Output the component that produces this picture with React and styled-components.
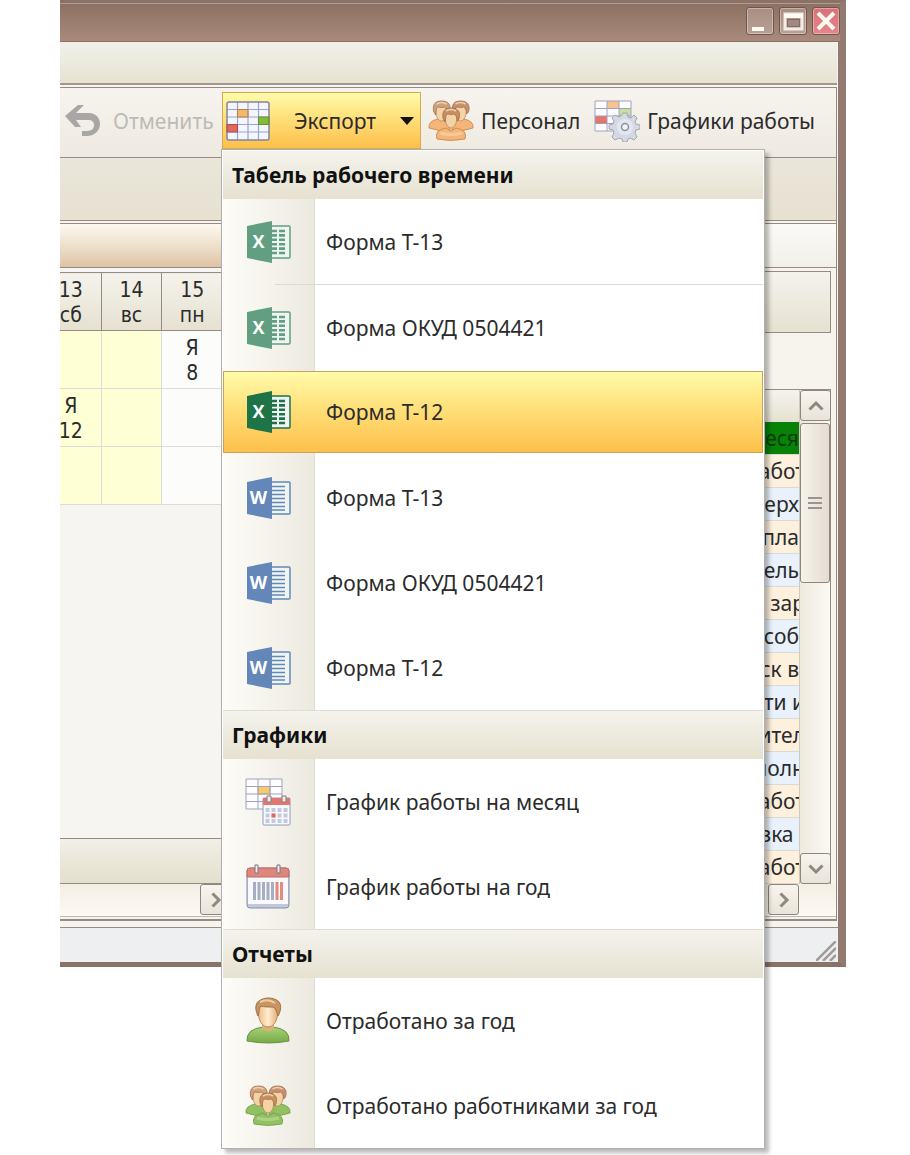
import React from "react";
import styled, { createGlobalStyle, css } from "styled-components";

const Global = createGlobalStyle`
  *, *::before, *::after { box-sizing: border-box; }
  body { margin: 0; background: #fff; color: #2b2b2b; font: 21px/28px "Noto Sans", "Open Sans", sans-serif; }
  button { font: inherit; color: inherit; border: 0; padding: 0; background: none; cursor: pointer; }
`;

const sand = "linear-gradient(#f4f3ec, #e6e1d0)";
const amber = "linear-gradient(#fffcab, #ffe07a 45%, #fdbf4a)";
const line = "#958b83";

const Page = styled.div`
  padding: 0 64px 188px 60px;
`;

const Window = styled.div`
  border: solid #8a7268;
  border-width: 3px 8px 5px 0;
  border-right-color: #927a70;
  background: #f7f4ee;
`;

const TitleBar = styled.header`
  display: flex;
  justify-content: flex-end;
  gap: 5px;
  height: 39px;
  padding: 3px 0;
  margin-right: -2px;
  border-top: 1px solid #b59c90;
  border-bottom: 1px solid #8b7268;
  background: linear-gradient(#8d7163, #a98a7b);
`;

const WindowButton = styled.button`
  width: 28px;
  height: 28px;
  border: 1px solid #6e574e;
  border-radius: 3px;
  box-shadow: inset 0 0 0 1px #ffffff55;
  background: ${(p) => (p.$close ? "linear-gradient(#d9717a, #e4858b)" : "linear-gradient(#a88e83, #b9a094)")};
  svg { display: block; }
`;

const MenuStrip = styled.div`
  height: 43px;
  margin-right: 1px;
  border-bottom: 2px solid #a3968e;
  background: linear-gradient(#f0f0ea, #edebdf 45%, #e7e2d1);
`;

const Frame = styled.div`
  margin: 2px 1px 0 0;
  padding-bottom: 2px;
  border: solid ${line};
  border-width: 1px 1px 2px 0;
`;

const Toolbar = styled.nav`
  display: flex;
  align-items: flex-start;
  height: 70px;
  padding: 4px 0 0 4px;
  border-bottom: 1px solid ${line};
  background: linear-gradient(#f7f4ef, #eeeae1);
  white-space: nowrap;
`;

const ToolButton = styled.button`
  display: flex;
  align-items: center;
  gap: ${(p) => p.$gap || 7}px;
  height: 57px;
  margin-right: ${(p) => p.$after || 0}px;
  &:disabled { width: 150px; color: #bdbab5; }
  svg { flex: none; }
`;

const ExportGroup = styled.div`
  position: relative;
  width: 199px;
  margin-right: 7px;
`;

const ExportButton = styled.button`
  display: flex;
  align-items: center;
  justify-content: space-between;
  width: 100%;
  height: 57px;
  padding: 0 6px 0 3px;
  border: 1px solid #d9a654;
  background: ${amber};
`;

const Menu = styled.div`
  position: absolute;
  z-index: 2;
  top: 57px;
  left: -1px;
  width: 544px;
  padding: 1px 1px 0;
  border: 1px solid #b3b0ab;
  background: #fff;
  box-shadow: 4px 4px 4px #00000045;
`;

const MenuHeading = styled.h2`
  height: ${(p) => (p.$ruled ? 49 : 48)}px;
  margin: 0;
  padding: 10px 9px;
  border-top: ${(p) => (p.$ruled ? "1px solid #dedcd3" : "0")};
  background: ${sand};
  color: #111;
  font-size: 21px;
  line-height: 28px;
`;

const MenuGroup = styled.div`
  background: linear-gradient(90deg, #fdfcf7, #f3f1e9 60%, #ece9df 91px, #dddbd3 91px, #dddbd3 92px, #fff 92px);
  background-size: 92px 100%;
  background-repeat: no-repeat;
`;

const MenuItem = styled.button`
  display: grid;
  grid-template-columns: 90px 1fr;
  align-items: center;
  width: 100%;
  height: 85px;
  text-align: left;
  svg { justify-self: center; }
  span { padding-left: 13px; }
  ${(p) => p.$active && css`
    height: 82px;
    margin: 1px 0 2px;
    background: ${amber};
    box-shadow: inset 0 0 0 1px #cfa05a;
  `}
`;

const Separator = styled.hr`
  height: 1px;
  margin: 0 0 0 52px;
  border: 0;
  background: #dcdad3;
`;

const SubBar = styled.div`
  height: 63px;
  border-bottom: 1px solid ${line};
  background: linear-gradient(#eae6d9, #e6e1d1);
`;

const Body = styled.main`
  display: flex;
  margin-top: 2px;
  border-top: 1px solid ${line};
`;

const SchedulePane = styled.section`
  flex: 0 0 171px;
  display: flex;
  flex-direction: column;
  overflow: hidden;
  background: #f6f5f2;
`;

const Band = styled.div`
  height: 44px;
  border-bottom: 1px solid ${line};
  background: ${(p) => (p.$warm ? "linear-gradient(#fdf8ee, #efe3d0 45%, #dfc3a5)" : "linear-gradient(#fbfaf7, #f2f0e9)")};
`;

const Schedule = styled.table`
  width: 183px;
  margin: 4px 0 0 -20px;
  table-layout: fixed;
  border-collapse: collapse;
  font: 21px/25px "DejaVu Sans Condensed", "Noto Sans", sans-serif;
  text-align: center;
  th { height: 58px; padding: 3px 0 0; border: 1px solid ${line}; background: ${sand}; font-weight: 400; white-space: pre-line; }
  td { height: 58px; padding: 3px 0 0; border: 1px solid #dddbd5; white-space: pre-line; }
`;

const Day = styled.td`
  background: ${(p) => (p.$off ? "#ffffd5" : "#fcfcfb")};
`;

const Totals = styled.div`
  height: 46px;
  margin-top: auto;
  border: solid ${line};
  border-width: 1px 0;
  background: linear-gradient(#f1efe6, #ebe8da 45%, #e4dfcd);
`;

const ScrollRow = styled.div`
  display: flex;
  justify-content: flex-end;
  height: 33px;
  padding-right: ${(p) => p.$corner || 0}px;
  border-bottom: 1px solid #bdb8b0;
  background: linear-gradient(#f4efe3, #fdfaf3);
`;

const ScrollButton = styled.button`
  display: grid;
  place-items: center;
  flex: none;
  width: 31px;
  height: 31px;
  border: 1px solid #8f857c;
  border-radius: 3px;
  background: linear-gradient(#f8f5ee, #e9e4d8);
`;

const LegendPane = styled.section`
  flex: 1;
  min-width: 0;
  display: flex;
  flex-direction: column;
`;

const LegendHeader = styled.div`
  height: 62px;
  margin: 3px 5px 56px 0;
  border: 1px solid ${line};
  background: ${sand};
`;

const LegendBox = styled.div`
  flex: 1;
  display: flex;
  margin-right: 5px;
  border: solid ${line};
  border-width: 1px 1px 0 0;
`;

const Legend = styled.ul`
  flex: 1;
  min-width: 0;
  display: flex;
  flex-direction: column;
  margin: 0;
  padding: 0;
  list-style: none;
  font: 21px/24px "Noto Sans", "Open Sans", sans-serif;
  &::before { content: ""; height: 32px; background: ${sand}; }
`;

const LegendItem = styled.li`
  flex: 1 0 33px;
  display: flex;
  align-items: center;
  justify-content: flex-end;
  overflow: hidden;
  border-bottom: 1px solid #dcd9d2;
  white-space: pre;
  background: #fdf0dc;
  span { margin-right: ${(p) => (p.$cut ? -6 : 0)}px; }
  &:nth-child(odd) { background: #e9f2fc; }
  &:first-child { background: #078207; color: #0a3d0a; }
`;

const VerticalScroll = styled.div`
  display: flex;
  flex-direction: column;
  justify-content: space-between;
  width: 31px;
  border-left: 1px solid #cfcabf;
  background: linear-gradient(90deg, #eeeadd, #fbf9f3);
`;

const Thumb = styled.div`
  display: grid;
  place-items: center;
  height: 160px;
  margin: 2px 0 auto;
  border: 1px solid #8f857c;
  border-radius: 3px;
  background: linear-gradient(90deg, #f6f3ea, #e3ddd2);
`;

const StatusBar = styled.footer`
  display: flex;
  align-items: flex-end;
  justify-content: flex-end;
  height: 35px;
  margin-top: 6px;
  padding: 0 2px 1px 0;
  border-top: 1px solid ${line};
  background: #eeeff0;
`;

const Chevron = ({ turn }) => (
  <svg width="18" height="18" viewBox="0 0 18 18" fill="none" stroke="#8e8883" strokeWidth="3">
    <path transform={`rotate(${turn} 9 9)`} d="M2.500 12.500 9 6l6.500 6.500" />
  </svg>
);

const UndoIcon = () => (
  <svg width="37" height="34" viewBox="0 0 37 34">
    <path d="M1 12 14 1h6l-8 8h13c7 0 11 5 11 11s-5 12-13 12h-5v-5h5c5 0 7-3 7-6s-2-5-6-5H12l5 7h-6z" fill="#a9a7a5" />
  </svg>
);

const TimesheetIcon = () => (
  <svg width="44" height="40" viewBox="0 0 44 40">
    <rect x="1" y="1" width="42" height="38" rx="2" fill="#f5f6fd" />
    <path d="M11.500 8.500H22v7H11.500z" fill="#f5b86a" />
    <path d="M32.500 16H43v7.500H32.500z" fill="#86bb38" />
    <path d="M1 23.500h10.500V31H1z" fill="#e0675a" />
    <path d="M1 8.500h42M1 16h42M1 23.500h42M1 31h42M11.500 1v38M22 1v38M32.500 1v38" stroke="#98a5cc" strokeWidth="1.200" />
    <rect x="1" y="1" width="42" height="38" rx="2" fill="none" stroke="#7f86a0" strokeWidth="1.500" />
    <path d="M11.500 8.500H22V16H11.500z" fill="none" stroke="#b98039" />
    <path d="M32.500 16H43v7.500H32.500z" fill="none" stroke="#5d9425" />
    <path d="M1 23.500h10.500V31H1z" fill="none" stroke="#b5463c" />
  </svg>
);

const Head = ({ x, y, hair }) => (
  <g transform={`translate(${x} ${y})`}>
    <path d="M3 8c0 8 3 12 6 12s6-4 6-12L13 4H5z" fill="#f4d2a8" stroke="#b98855" strokeWidth=".8" />
    <path d="M1 10C0 3 3 0 9 0c7 0 10 4 8 11l-2 2c0-4-1-6-3-7-3 1-6 0-7 0-2 2-1 5-2 8z" fill={hair} stroke="#9c6e48" strokeWidth=".8" />
    <path d="M4 3q5-3 10 0" fill="none" stroke="#ecd3b6" strokeWidth="1.500" />
  </g>
);

const TeamIcon = ({ shirt, edge }) => (
  <svg width="46" height="42" viewBox="0 0 46 42">
    <g fill={shirt} stroke={edge} strokeWidth=".8">
      <path d="M1 28q-1-7 9-9l12 3v8q-11 2-21-2zM45 28q1-7-9-9l-12 3v8q11 2 21-2z" />
    </g>
    <Head x="4.500" y="1" hair="#cfa27c" />
    <Head x="23.500" y="1" hair="#c98f6e" />
    <path d="M9 39q-3-9 9-11l5 3 5-3q12 2 9 11-14 3-28 0z" fill={shirt} stroke={edge} strokeWidth=".8" />
    <path d="M12 33q10 3 22 0" fill="none" stroke="#fff" strokeOpacity=".25" strokeWidth="3" />
    <Head x="14" y="8" hair="#c88f5c" />
  </svg>
);

const PersonIcon = () => (
  <svg width="44" height="48" viewBox="0 0 44 48">
    <defs>
      <linearGradient id="shirt" x2="0" y2="1"><stop stopColor="#a9cf79" /><stop offset="1" stopColor="#74ab44" /></linearGradient>
      <linearGradient id="face"><stop stopColor="#eabd84" /><stop offset=".5" stopColor="#ffecd0" /><stop offset="1" stopColor="#e2ae76" /></linearGradient>
    </defs>
    <path d="M1 44q-1-12 16-14h10q17 2 16 14-20 4-42 0z" fill="url(#shirt)" stroke="#679343" />
    <path d="M16 27v5q6 4 12 0v-5z" fill="#e0ae78" />
    <path d="M12 13c0 10 4 17 10 17s10-7 10-17L29 7H15z" fill="url(#face)" stroke="#bb8a56" />
    <path d="M12 19c-3-6-3-13 1-15 5-4 14-4 19 0 4 3 3 10 0 15-2-5-2-8-5-9-5 0-9 0-12-1-3 3-1 6-3 10z" fill="#c99562" stroke="#9b704b" />
    <path d="M14 5q8-4 15 1" fill="none" stroke="#e9cda9" strokeWidth="2" />
  </svg>
);

const SmallGrid = ({ marks }) => (
  <g>
    <path d="M1 1h36v30H1z" fill="#fdfdff" />
    {marks}
    <path d="M1 1h36v30H1zM1 8.500h36M1 16h36M1 23.500h36M13 1v30M25 1v30" fill="none" stroke="#a0a2bd" />
  </g>
);

const ScheduleGearIcon = () => (
  <svg width="46" height="42" viewBox="0 0 46 42">
    <SmallGrid marks={<><path d="M13 1h12v7.500H13z" fill="#f6c391" /><path d="M25 8.500h12V16H25z" fill="#c9dfa0" /><path d="M1 16h12v7.500H1z" fill="#e77369" /></>} />
    <path d="m29 13 4 0 1 4 3 1 3-3 3 3-2 4 1 2 4 1v4l-4 1-1 3 2 4-3 3-4-2-2 1-1 3h-4l-1-3-3-1-4 2-3-3 2-4-1-3-4-1v-4l4-1 1-3-2-3 3-3 4 2 2-1z" fill="#d5d9e3" stroke="#a0a6b4" />
    <circle cx="31" cy="27" r="8" fill="#e4e7ef" />
    <circle cx="31" cy="27" r="3.500" fill="#f3f3f5" stroke="#8b92a3" strokeWidth="1.500" />
  </svg>
);

const MonthIcon = () => (
  <svg width="46" height="48" viewBox="0 0 46 48">
    <SmallGrid marks={<path d="M13 8.500h12V16H13z" fill="#f3ca6e" stroke="#d9a94d" />} />
    <rect x="18" y="20" width="27" height="27" rx="1" fill="#fbfbff" stroke="#8f9abc" />
    <path d="M18 20h27v7H18z" fill="#df7970" />
    <path d="M22 18h4v6h-4zM37 18h4v6h-4z" fill="#eee" stroke="#8a7a83" />
    <g fill="#c3c9de">
      {[30, 35.5, 41].map((y) => [20.5, 26.5, 32.5, 38.5].map((x) => <rect key={x + "-" + y} x={x} y={y} width="4" height="4" />))}
    </g>
    <path d="M26.500 35.500h4v4h-4z" fill="#df6a5e" />
  </svg>
);

const YearIcon = () => (
  <svg width="44" height="46" viewBox="0 0 44 46">
    <rect x="1" y="4" width="42" height="40" rx="3" fill="#c2c8dc" stroke="#8790ab" />
    <path d="M2 5h40v35H2z" fill="#f8f8fd" />
    <path d="M1 13V7q0-3 3-3h36q3 0 3 3v6z" fill="#de857c" stroke="#bf6c66" />
    <path d="M9 1h3v8H9zM31 1h3v8h-3z" fill="#eee" stroke="#81717b" />
    <path d="M8.500 18v18M13 18v18M17.500 18v18M22 18v18M26.500 18v18" stroke="#a6aec2" strokeWidth="3" />
    <path d="M31 18v18M35.500 18v18" stroke="#e18b7d" strokeWidth="3" />
  </svg>
);

const OfficeIcon = ({ letter, color, cells }) => (
  <svg width="45" height="42" viewBox="0 0 45 42">
    <rect x="24" y="5" width="20" height="32" rx="1" fill="#eef4f1" stroke={color} strokeWidth="1.500" />
    {cells ? (
      <path d="M25 10h6M33 10h6M25 14.400h6M33 14.400h6M25 18.800h6M33 18.800h6M25 23.200h6M33 23.200h6M25 27.600h6M33 27.600h6M25 32h6M33 32h6" stroke={color} strokeWidth="2.600" />
    ) : (
      <path d="M25 9.500h14M25 13.500h14M25 17.500h14M25 21.500h14M25 25.500h14M25 29.500h14M25 33h14" stroke={color} strokeWidth="1.300" />
    )}
    <path d="M1 5 26 0v42L1 37z" fill={color} />
    <text x="12.500" y="27" fill="#fff" fontFamily="Open Sans" fontWeight="700" fontSize="18" textAnchor="middle">{letter}</text>
  </svg>
);

const paleExcel = <OfficeIcon letter="X" color="#629f80" cells />;
const excel = <OfficeIcon letter="X" color="#1e7347" cells />;
const word = <OfficeIcon letter="W" color="#6487b9" />;

const groups = [
  { title: "Табель рабочего времени", items: [
    { label: "Форма Т-13", icon: paleExcel, ruled: true },
    { label: "Форма ОКУД 0504421", icon: paleExcel },
    { label: "Форма Т-12", icon: excel, active: true },
    { label: "Форма Т-13", icon: word },
    { label: "Форма ОКУД 0504421", icon: word },
    { label: "Форма Т-12", icon: word },
  ] },
  { title: "Графики", items: [
    { label: "График работы на месяц", icon: <MonthIcon /> },
    { label: "График работы на год", icon: <YearIcon /> },
  ] },
  { title: "Отчеты", items: [
    { label: "Отработано за год", icon: <PersonIcon /> },
    { label: "Отработано работниками за год", icon: <TeamIcon shirt="#93c162" edge="#6d9c48" /> },
  ] },
];

const legend = [
  { text: "меся" },
  { text: "абот", cut: true },
  { text: "верх" },
  { text: "пла" },
  { text: "ель" },
  { text: "ы зар", cut: true },
  { text: "соб" },
  { text: "ск в" },
  { text: "ти и", cut: true },
  { text: "ител", cut: true },
  { text: "полн", cut: true },
  { text: "абот", cut: true },
  { text: "вка " },
  { text: "абот", cut: true },
];

export default function App() {
  return (
    <Page>
      <Global />
      <Window>
        <TitleBar>
          <WindowButton aria-label="Свернуть">
            <svg width="26" height="26"><path d="M5 19h12v4H5z" fill="#fffaf2" /></svg>
          </WindowButton>
          <WindowButton aria-label="Развернуть">
            <svg width="26" height="26" fill="none"><path d="M5 6h17v15H5z" stroke="#f4ede6" strokeWidth="3" /><path d="M4 6h19v4H4z" fill="#fffaf2" /><path d="M7.500 11.500h12v7h-12z" fill="#a08a82" stroke="#806b63" /></svg>
          </WindowButton>
          <WindowButton $close aria-label="Закрыть">
            <svg width="26" height="26"><path d="m5 5 16 16M21 5 5 21" stroke="#fff8ef" strokeWidth="4" /></svg>
          </WindowButton>
        </TitleBar>
        <MenuStrip />
        <Frame>
          <Toolbar>
            <ToolButton disabled $gap={12} $after={8}><UndoIcon />Отменить</ToolButton>
            <ExportGroup>
              <ExportButton aria-haspopup="menu" aria-expanded="true">
                <TimesheetIcon />
                Экспорт
                <svg width="14" height="8"><path d="M0 0h14L7 8z" fill="#111" /></svg>
              </ExportButton>
              <Menu role="menu">
                {groups.map((group, index) => (
                  <React.Fragment key={group.title}>
                    <MenuHeading $ruled={index > 0}>{group.title}</MenuHeading>
                    <MenuGroup>
                      {group.items.map((item, i) => (
                        <React.Fragment key={i}>
                          <MenuItem role="menuitem" $active={item.active}>{item.icon}<span>{item.label}</span></MenuItem>
                          {item.ruled && <Separator />}
                        </React.Fragment>
                      ))}
                    </MenuGroup>
                  </React.Fragment>
                ))}
              </Menu>
            </ExportGroup>
            <ToolButton $after={14}><TeamIcon shirt="#f3b678" edge="#c58345" />Персонал</ToolButton>
            <ToolButton><ScheduleGearIcon />Графики работы</ToolButton>
          </Toolbar>
          <SubBar />
          <Body>
            <SchedulePane>
              <Band $warm />
              <Schedule>
                <thead>
                  <tr><th>{"13\nсб"}</th><th>{"14\nвс"}</th><th>{"15\nпн"}</th></tr>
                </thead>
                <tbody>
                  <tr><Day $off /><Day $off /><Day>{"Я\n8"}</Day></tr>
                  <tr><Day $off>{"Я\n12"}</Day><Day $off /><Day /></tr>
                  <tr><Day $off /><Day $off /><Day /></tr>
                </tbody>
              </Schedule>
              <Totals />
              <ScrollRow><ScrollButton aria-label="Вправо"><Chevron turn={90} /></ScrollButton></ScrollRow>
            </SchedulePane>
            <LegendPane>
              <Band />
              <LegendHeader />
              <LegendBox>
                <Legend>
                  {legend.map((row, i) => <LegendItem key={i} $cut={row.cut}><span>{row.text}</span></LegendItem>)}
                </Legend>
                <VerticalScroll>
                  <ScrollButton aria-label="Вверх"><Chevron turn={0} /></ScrollButton>
                  <Thumb>
                    <svg width="14" height="14"><path d="M0 2h14M0 7h14M0 12h14" stroke="#9b958d" strokeWidth="2" /></svg>
                  </Thumb>
                  <ScrollButton aria-label="Вниз"><Chevron turn={180} /></ScrollButton>
                </VerticalScroll>
              </LegendBox>
              <ScrollRow $corner={37}><ScrollButton aria-label="Вправо"><Chevron turn={90} /></ScrollButton></ScrollRow>
            </LegendPane>
          </Body>
        </Frame>
        <StatusBar>
          <svg width="20" height="20" stroke="#a09b98" strokeWidth="2.500"><path d="M0 20 20 0M7 20 20 7M14 20l6-6" /></svg>
        </StatusBar>
      </Window>
    </Page>
  );
}
